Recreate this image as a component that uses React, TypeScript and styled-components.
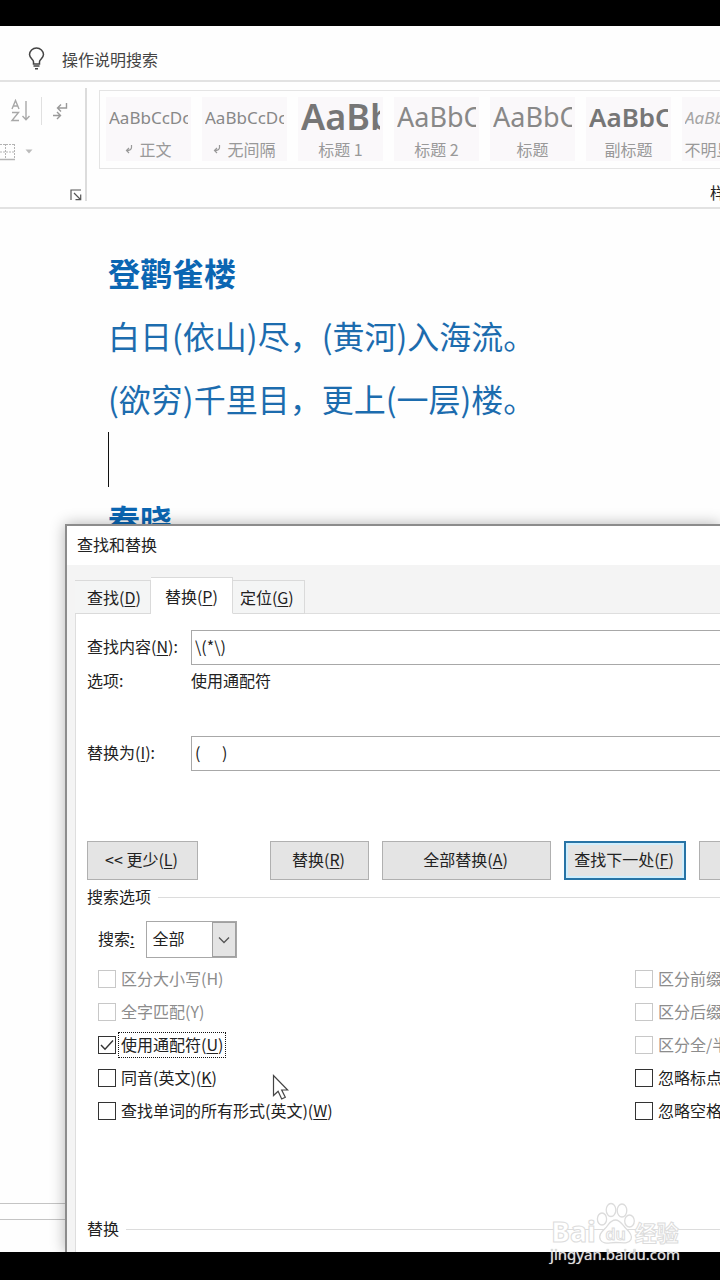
import React from "react";
import styled, { createGlobalStyle, css } from "styled-components";

const cjk = `"Noto Sans CJK SC", "Noto Sans", sans-serif`;
const latin = `"Noto Sans", "Noto Sans CJK SC", sans-serif`;

const GlobalStyle = createGlobalStyle`
  *, *::before, *::after { box-sizing: border-box; }
  body { margin: 0; background: #000; font-family: ${cjk}; font-size: 16px; line-height: 24px; color: #222; }
  button, input, select { font: inherit; color: inherit; margin: 0; }
  u { text-decoration-thickness: 1px; text-underline-offset: 2px; }
`;

const Screen = styled.div`
  position: relative;
  display: flex;
  flex-direction: column;
  min-height: 100vh;
  padding: 26px 0 28px;
  background: #000;
  overflow: hidden;
`;

const AppWindow = styled.main`
  flex: 1;
  display: flex;
  flex-direction: column;
  background: #fefefe;
`;

const SearchBar = styled.header`
  display: flex;
  align-items: center;
  gap: 17px;
  height: 56px;
  padding: 0 0 0 28px;
  border-bottom: 2px solid #e2e2e2;
`;

const SearchLink = styled.button`
  display: flex;
  align-items: center;
  gap: 17px;
  padding: 12px 0 0;
  border: 0;
  background: none;
  color: #444;
`;

const Ribbon = styled.section`
  display: flex;
  height: 127px;
  border-bottom: 2px solid #e2e2e2;
`;

const ParagraphGroup = styled.div`
  display: flex;
  flex-direction: column;
  flex: none;
  width: 87px;
  margin: 6px 0;
  padding-top: 2px;
  border-right: 2px solid #dcdcdc;
`;

const ToolRow = styled.div<{ $start?: boolean }>`
  display: flex;
  align-items: center;
  height: 41px;
  padding-left: ${(p) => (p.$start ? 0 : 10)}px;
  gap: ${(p) => (p.$start ? 9 : 10)}px;
`;

const ToolButton = styled.button`
  display: flex;
  padding: 0;
  border: 0;
  background: none;
`;

const ToolDivider = styled.span`
  width: 1px;
  height: 28px;
  background: #e0e0e0;
`;

const Launcher = styled(ToolButton)`
  margin: auto 3px 0 auto;
`;

const StylesGroup = styled.div`
  flex: 1;
  min-width: 0;
  display: flex;
  flex-direction: column;
  padding: 8px 0 0 12px;
`;

const Gallery = styled.div`
  display: flex;
  gap: 11px;
  padding: 6px 0 7px 6px;
  border: 1px solid #e4e4e4;
  border-right: 0;
  overflow: hidden;
`;

const StyleCard = styled.button`
  display: flex;
  flex-direction: column;
  flex: none;
  width: 85px;
  height: 64px;
  padding: 0 3px;
  border: 0;
  background: #faf8fa;
  color: #8a8a8a;
  text-align: left;
`;

const Preview = styled.span<{ $size: number; $bold?: boolean; $italic?: boolean }>`
  height: 40px;
  width: 100%;
  overflow: hidden;
  white-space: nowrap;
  font-family: ${latin};
  font-size: ${(p) => p.$size}px;
  line-height: ${(p) => (p.$size < 20 ? 42 : 40)}px;
  font-weight: ${(p) => (p.$bold ? 600 : 400)};
  font-style: ${(p) => (p.$italic ? "italic" : "normal")};
  color: ${(p) => (p.$bold ? "#767676" : p.$italic ? "#a4a4a4" : "#888")};
`;

const StyleName = styled.span`
  display: flex;
  align-items: center;
  justify-content: center;
  gap: 6px;
  white-space: nowrap;
  color: #999;
`;

const GroupCaption = styled.div`
  align-self: flex-end;
  width: 10px;
  margin-top: 11px;
  overflow: hidden;
  white-space: nowrap;
`;

const Workspace = styled.section`
  position: relative;
  flex: 1;
  display: flex;
  flex-direction: column;
  overflow: hidden;
`;

const Document = styled.article`
  flex: 1;
  padding: 32px 0 0 108px;
  color: #1c6cae;
  font-size: 32px;
  line-height: 63px;
`;

const PoemTitle = styled.h2`
  margin: 0;
  font-size: inherit;
  font-weight: 700;
  color: #0b66b2;
`;

const Verse = styled.p`
  margin: 0;
`;

const CaretLine = styled.p`
  display: flex;
  align-items: center;
  height: 58px;
  margin: 0;
  &::before {
    content: "";
    width: 1px;
    height: 55px;
    background: #111;
  }
`;

const ScrollStrip = styled.div`
  height: 17px;
  border: solid #c4c4c4;
  border-width: 1px 0;
`;

const StatusStrip = styled.div`
  height: 32px;
`;

const Dialog = styled.section`
  position: absolute;
  top: 315px;
  left: 65px;
  right: 0;
  bottom: 0;
  display: flex;
  flex-direction: column;
  border: solid #8c8c8c;
  border-width: 2px 0 0 2px;
  background: #f4f4f4;
  box-shadow: 0 0 14px rgba(0, 0, 0, 0.3);
  overflow: hidden;
`;

const DialogTitle = styled.h1`
  margin: 0;
  padding: 6px 10px 9px;
  background: #fff;
  font-size: 16px;
  font-weight: 400;
  line-height: 24px;
`;

const Tabs = styled.div`
  display: flex;
  align-items: flex-end;
  margin: 12px 0 -1px 8px;
`;

const Tab = styled.button<{ $active?: boolean }>`
  position: relative;
  height: 34px;
  padding: 0 10px 0 7px;
  border: 1px solid #dadada;
  border-left: 0;
  background: #f4f5f5;
  ${(p) =>
    p.$active &&
    css`
      height: 37px;
      padding: 0 14px 0 14px;
      border-bottom-color: #fff;
      background: #fff;
    `}
  &:first-child {
    padding: 0 9px 0 12px;
  }
`;

const Panel = styled.form`
  flex: 1;
  min-height: 0;
  display: flex;
  flex-direction: column;
  margin-left: 8px;
  padding: 16px 0 0 11px;
  border: solid #dedede;
  border-width: 1px 0 0 1px;
  background: #fff;
`;

const Field = styled.div<{ $gap?: number }>`
  display: grid;
  grid-template-columns: 104px 1fr;
  align-items: center;
  line-height: 20px;
  margin-bottom: ${(p) => p.$gap ?? 0}px;
  label,
  span {
    padding-bottom: 4px;
  }
`;

const TextBox = styled.input`
  width: 100%;
  height: 35px;
  padding: 0 4px 4px 3px;
  border: solid #a8a8a8;
  border-width: 1px 0 1px 1px;
  background: #fff;
  outline: 0;
`;

const Actions = styled.div`
  display: flex;
  gap: 13px;
  height: 39px;
  overflow: hidden;
`;

const PushButton = styled.button<{ $width: number; $primary?: boolean; $push?: boolean }>`
  flex: none;
  width: ${(p) => p.$width}px;
  padding: 0 2px 3px 0;
  margin-right: ${(p) => (p.$push ? 59 : 0)}px;
  border: 1px solid #b0b0b0;
  background: #e4e4e4;
  white-space: nowrap;
  ${(p) =>
    p.$primary &&
    css`
      border: 2px solid #2874a6;
      box-shadow: inset 0 0 0 2px #cfeefd;
    `}
`;

const SectionHead = styled.h3`
  display: flex;
  align-items: center;
  gap: 7px;
  margin: 4px 0 0;
  font-size: 16px;
  font-weight: 400;
  line-height: 24px;
  &::after {
    content: "";
    flex: 1;
    height: 1px;
    margin-top: 3px;
    background: #dcdcdc;
  }
`;

const SearchScope = styled.div`
  display: flex;
  align-items: center;
  gap: 12px;
  margin: 13px 0 4px 11px;
  label {
    line-height: 20px;
    padding-bottom: 4px;
  }
`;

const SelectFrame = styled.div`
  display: grid;
  grid-template-columns: 1fr 24px;
  width: 91px;
  height: 37px;
  border: 1px solid #a8a8a8;
  background: #fff;
`;

const ScopeSelect = styled.select`
  grid-area: 1 / 1 / 2 / 3;
  padding: 0 0 4px 5px;
  appearance: none;
  border: 0;
  background: none;
  outline: 0;
`;

const SelectArrow = styled.span`
  grid-area: 1 / 2;
  display: grid;
  place-items: center;
  border: 1px solid #a0a0a0;
  background: #e4e4e4;
  pointer-events: none;
`;

const Options = styled.div`
  display: grid;
  grid-template-columns: 537px 1fr;
  margin-left: 11px;
  overflow: hidden;
`;

const OptionColumn = styled.div`
  min-width: 0;
`;

const Option = styled.label<{ $off?: boolean }>`
  display: flex;
  align-items: center;
  gap: 2px;
  height: 33px;
  white-space: nowrap;
  color: ${(p) => (p.$off ? "#8c8c8c" : "#222")};
`;

const BoxFrame = styled.span`
  display: grid;
  flex: none;
  width: 18px;
  height: 18px;
  svg {
    grid-area: 1 / 1;
    pointer-events: none;
  }
`;

const Box = styled.input`
  grid-area: 1 / 1;
  width: 18px;
  height: 18px;
  appearance: none;
  border: 1px solid #333;
  background: #fff;
  &:disabled {
    border-color: #c8c8c8;
  }
`;

const OptionText = styled.span<{ $focused?: boolean }>`
  padding: 0 2px 2px;
  line-height: 22px;
  border: 1px dotted ${(p) => (p.$focused ? "#111" : "transparent")};
`;

const ReplaceHead = styled(SectionHead)`
  margin-top: 89px;
`;

const Pointer = styled.svg`
  position: absolute;
  left: 205px;
  top: 548px;
`;

const Watermark = styled.div`
  position: absolute;
  right: 40px;
  bottom: 17px;
  display: flex;
  flex-direction: column;
  align-items: center;
`;

const Brand = styled.div`
  display: flex;
  align-items: flex-end;
  height: 44px;
  font-family: ${latin};
  font-weight: 700;
  line-height: 28px;
  color: #fff;
  -webkit-text-stroke: 1px #dcdcdc;
`;

const BrandLatin = styled.span`
  font-size: 28px;
  font-weight: 800;
`;

const BrandCjk = styled.span`
  font-family: ${cjk};
  font-size: 22px;
`;

const Site = styled.a`
  font-family: ${latin};
  font-size: 15px;
  line-height: 18px;
  color: #e4e4e4;
  text-decoration: none;
  text-shadow: 0 0 1px #999;
`;

const BulbIcon = () => (
  <svg width="17" height="24" viewBox="0 0 17 24" fill="none" stroke="#444" strokeWidth="1.5">
    <path d="M5.5 17v-2.2C5.5 12.6 1.5 11 1.5 7.6a7 6.6 0 0 1 14 0c0 3.400-4 5-4 7.200V17z" />
    <path d="M5.500 19h6M7 21.800h3" />
  </svg>
);

const SortIcon = () => (
  <svg width="21" height="24" viewBox="0 0 21 24" fill="none" stroke="#a8a8a8" strokeWidth="1.4">
    <path d="M2 10 5.500 1.500 9 10M3.200 7h4.600M2 13.500h6.500L2 21.500h7" />
    <path d="M16 2v18.500M12.500 17l3.500 3.700 3.500-3.700" />
  </svg>
);

const MarksIcon = () => (
  <svg width="16" height="20" viewBox="0 0 16 20" fill="none" stroke="#999" strokeWidth="1.4">
    <path d="M14.500 2v5H6M9 3.500 5.500 7 9 10.500M1 14.500h7M5 11l3.500 3.500L5 18" />
  </svg>
);

const BordersIcon = () => (
  <svg width="16" height="18" viewBox="0 0 16 18" fill="none" stroke="#b4b4b4">
    <path d="M0 1.500h14M0 9h14M5.500 1v15M14.500 1v15" strokeDasharray="2 1" />
    <path d="M0 16.500h15" strokeWidth="1.500" />
  </svg>
);

const DownIcon = () => (
  <svg width="8" height="5" viewBox="0 0 8 5">
    <path d="M0.500 0.500h7L4 4.500z" fill="#bbb" />
  </svg>
);

const LauncherIcon = () => (
  <svg width="12" height="12" viewBox="0 0 12 12" fill="none" stroke="#555" strokeWidth="1.200">
    <path d="M1 11V1h10M4 4l6.500 6.500M10.700 5.500v5.200H5.500" />
  </svg>
);

const ReturnIcon = () => (
  <svg width="8" height="10" viewBox="0 0 8 10" fill="none" stroke="#999" strokeWidth="1.200">
    <path d="M6.500 1v2.500c0 2-1.500 3-5 3M4 4 1.500 6.500 4 9" />
  </svg>
);

const PawIcon = () => (
  <svg width="39" height="43" viewBox="0 0 39 43" fill="#fff" stroke="#dcdcdc" strokeWidth="1.300">
    <ellipse cx="6" cy="17" rx="4.600" ry="6" />
    <ellipse cx="15" cy="8" rx="4.800" ry="6.500" />
    <ellipse cx="26" cy="8.500" rx="4.800" ry="6.500" />
    <ellipse cx="33.500" cy="19" rx="4.800" ry="6" />
    <path d="M19.500 18c5 0 7 5 10.500 8.500 3.500 3.300 7 7 5 11-2.500 5-9 3-15.500 3s-12 2.500-15-2.500c-2.500-4.500 1-8 4.500-11.500 3.500-3.500 5-8.500 10.500-8.500z" />
    <text x="19.500" y="38" textAnchor="middle" fontFamily="Noto Sans" fontSize="16" fontWeight="600" strokeWidth="1">du</text>
  </svg>
);

type StyleEntry = { name: string; sample: string; size: number; bold?: boolean; italic?: boolean; mark?: boolean };

const styleEntries: StyleEntry[] = [
  { name: "正文", sample: "AaBbCcDc", size: 17, mark: true },
  { name: "无间隔", sample: "AaBbCcDc", size: 17, mark: true },
  { name: "标题 1", sample: "AaBb", size: 36, bold: true },
  { name: "标题 2", sample: "AaBbC", size: 27 },
  { name: "标题", sample: "AaBbC", size: 27 },
  { name: "副标题", sample: "AaBbC", size: 26, bold: true },
  { name: "不明显强调", sample: "AaBbCcDc", size: 17, italic: true },
];

type OptionEntry = { text: string; hotkey?: string; off?: boolean; checked?: boolean };

const leftOptions: OptionEntry[] = [
  { text: "区分大小写", hotkey: "H", off: true },
  { text: "全字匹配", hotkey: "Y", off: true },
  { text: "使用通配符", hotkey: "U", checked: true },
  { text: "同音(英文)", hotkey: "K" },
  { text: "查找单词的所有形式(英文)", hotkey: "W" },
];

const rightOptions: OptionEntry[] = [
  { text: "区分前缀", off: true },
  { text: "区分后缀", off: true },
  { text: "区分全/半角", off: true },
  { text: "忽略标点" },
  { text: "忽略空格" },
];

const Hotkey = ({ k }: { k: string }) => (
  <>
    (<u>{k}</u>)
  </>
);

const OptionList = ({ items }: { items: OptionEntry[] }) => (
  <OptionColumn>
    {items.map((o) => (
      <Option key={o.text} $off={o.off}>
        <BoxFrame>
          <Box type="checkbox" disabled={o.off} defaultChecked={o.checked} />
          {o.checked && (
            <svg width="18" height="18" viewBox="0 0 18 18" fill="none" stroke="#333" strokeWidth="1.400">
              <path d="M3 9l4 4.200L15 4.500" />
            </svg>
          )}
        </BoxFrame>
        <OptionText $focused={o.checked}>
          {o.text}
          {o.hotkey && (o.off ? `(${o.hotkey})` : <Hotkey k={o.hotkey} />)}
        </OptionText>
      </Option>
    ))}
  </OptionColumn>
);

export default function App() {
  return (
    <Screen>
      <GlobalStyle />
      <AppWindow>
        <SearchBar>
          <SearchLink type="button">
            <BulbIcon />
            操作说明搜索
          </SearchLink>
        </SearchBar>
        <Ribbon>
          <ParagraphGroup>
            <ToolRow>
              <ToolButton type="button" aria-label="排序"><SortIcon /></ToolButton>
              <ToolDivider />
              <ToolButton type="button" aria-label="显示编辑标记"><MarksIcon /></ToolButton>
            </ToolRow>
            <ToolRow $start>
              <ToolButton type="button" aria-label="边框"><BordersIcon /></ToolButton>
              <ToolButton type="button" aria-label="更多边框"><DownIcon /></ToolButton>
            </ToolRow>
            <Launcher type="button" aria-label="段落设置"><LauncherIcon /></Launcher>
          </ParagraphGroup>
          <StylesGroup>
            <Gallery>
              {styleEntries.map((s) => (
                <StyleCard key={s.name} type="button">
                  <Preview $size={s.size} $bold={s.bold} $italic={s.italic}>{s.sample}</Preview>
                  <StyleName>
                    {s.mark && <ReturnIcon />}
                    {s.name}
                  </StyleName>
                </StyleCard>
              ))}
            </Gallery>
            <GroupCaption>样式</GroupCaption>
          </StylesGroup>
        </Ribbon>
        <Workspace>
          <Document>
            <PoemTitle>登鹳雀楼</PoemTitle>
            <Verse>白日(依山)尽，(黄河)入海流。</Verse>
            <Verse>(欲穷)千里目，更上(一层)楼。</Verse>
            <CaretLine />
            <PoemTitle>春晓</PoemTitle>
          </Document>
          <ScrollStrip />
          <StatusStrip />
          <Dialog role="dialog" aria-labelledby="dialog-title">
            <DialogTitle id="dialog-title">查找和替换</DialogTitle>
            <Tabs role="tablist">
              <Tab type="button" role="tab">查找<Hotkey k="D" /></Tab>
              <Tab type="button" role="tab" aria-selected $active>替换<Hotkey k="P" /></Tab>
              <Tab type="button" role="tab">定位<Hotkey k="G" /></Tab>
            </Tabs>
            <Panel>
              <Field $gap={5}>
                <label htmlFor="find">查找内容<Hotkey k="N" />:</label>
                <TextBox id="find" defaultValue={"\\(*\\)"} />
              </Field>
              <Field $gap={42}>
                <span>选项:</span>
                <span>使用通配符</span>
              </Field>
              <Field $gap={70}>
                <label htmlFor="replace">替换为<Hotkey k="I" />:</label>
                <TextBox id="replace" defaultValue="(      )" />
              </Field>
              <Actions>
                <PushButton type="button" $width={111} $push>&lt;&lt; 更少<Hotkey k="L" /></PushButton>
                <PushButton type="button" $width={99}>替换<Hotkey k="R" /></PushButton>
                <PushButton type="button" $width={169}>全部替换<Hotkey k="A" /></PushButton>
                <PushButton type="button" $width={122} $primary>查找下一处<Hotkey k="F" /></PushButton>
                <PushButton type="button" $width={99} aria-label="取消" />
              </Actions>
              <SectionHead>搜索选项</SectionHead>
              <SearchScope>
                <label htmlFor="scope">搜索<u>:</u></label>
                <SelectFrame>
                  <ScopeSelect id="scope" defaultValue="全部">
                    <option>全部</option>
                  </ScopeSelect>
                  <SelectArrow>
                    <svg width="12" height="8" viewBox="0 0 12 8" fill="none" stroke="#555" strokeWidth="1.300">
                      <path d="M1 1.500l5 5 5-5" />
                    </svg>
                  </SelectArrow>
                </SelectFrame>
              </SearchScope>
              <Options>
                <OptionList items={leftOptions} />
                <OptionList items={rightOptions} />
              </Options>
              <ReplaceHead>替换</ReplaceHead>
            </Panel>
            <Pointer width="17" height="27" viewBox="0 0 17 27" fill="#fff" stroke="#444" strokeWidth="1.200">
              <path d="M1.500 1.500v20l4.600-4.300 3.600 7.800 3.600-1.800-3.600-7.200h6z" />
            </Pointer>
          </Dialog>
        </Workspace>
      </AppWindow>
      <Watermark>
        <Brand>
          <BrandLatin>Bai</BrandLatin>
          <PawIcon />
          <BrandCjk>经验</BrandCjk>
        </Brand>
        <Site href="#">jingyan.baidu.com</Site>
      </Watermark>
    </Screen>
  );
}
